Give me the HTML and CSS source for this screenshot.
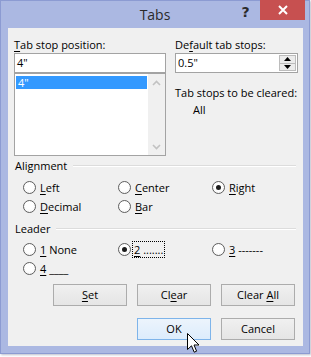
FILE: index.html
```html
<!DOCTYPE html>
<html>
<head>
<meta charset="utf-8">
<link rel="stylesheet" href="styles.css">
</head>
<body>
<div class="window">
  <div class="titlebar">
    <div></div>
    <div class="title">Tabs</div>
    <div class="tb-right">
      <div class="help">?</div>
      <div class="close"><svg width="10" height="10" viewBox="0 0 10 10"><path d="M1 1 L9 9 M9 1 L1 9" stroke="#fff" stroke-width="2"/></svg></div>
    </div>
  </div>
  <div class="panel">
    <div class="top">
      <div class="col-left">
        <div class="lbl"><u>T</u>ab stop position:</div>
        <div class="input">4"</div>
        <div class="listbox">
          <div class="items"><div class="item sel">4"</div></div>
          <div class="scroll">
            <div class="arrow"><svg width="9" height="6" viewBox="0 0 9 6"><path d="M1 5 L4.5 1.5 L8 5" fill="none" stroke="#c2c2c2" stroke-width="1.6"/></svg></div>
            <div class="arrow"><svg width="9" height="6" viewBox="0 0 9 6"><path d="M1 1 L4.5 4.5 L8 1" fill="none" stroke="#c2c2c2" stroke-width="1.6"/></svg></div>
          </div>
        </div>
      </div>
      <div class="col-right">
        <div class="lbl">De<u>f</u>ault tab stops:</div>
        <div class="spin">
          <div class="spin-val">0.5"</div>
          <div class="spin-btns">
            <div class="sbtn"><svg width="7" height="4" viewBox="0 0 7 4"><path d="M0 4 L3.5 0 L7 4 Z" fill="#000"/></svg></div>
            <div class="sbtn"><svg width="7" height="4" viewBox="0 0 7 4"><path d="M0 0 L3.5 4 L7 0 Z" fill="#000"/></svg></div>
          </div>
        </div>
        <div class="clr-lbl">Tab stops to be cleared:</div>
        <div class="clr-val">All</div>
      </div>
    </div>

    <div class="group group-align"><span>Alignment</span><div class="rule"></div></div>
    <div class="radios">
      <div class="radio"><span class="circle"></span><span><u>L</u>eft</span></div>
      <div class="radio"><span class="circle"></span><span><u>C</u>enter</span></div>
      <div class="radio"><span class="circle on"></span><span><u>R</u>ight</span></div>
      <div class="radio"><span class="circle"></span><span><u>D</u>ecimal</span></div>
      <div class="radio"><span class="circle"></span><span><u>B</u>ar</span></div>
    </div>

    <div class="group group-leader"><span>Leader</span><div class="rule"></div></div>
    <div class="radios radios-leader">
      <div class="radio"><span class="circle"></span><span><u>1</u> None</span></div>
      <div class="radio"><span class="circle on"></span><span class="focus"><u>2</u> .......</span></div>
      <div class="radio"><span class="circle"></span><span><u>3</u> -------</span></div>
      <div class="radio"><span class="circle"></span><span><u>4</u> ____</span></div>
    </div>

    <div class="btnrow btnrow-1">
      <div class="btn"><u>S</u>et</div>
      <div class="btn">Cl<u>e</u>ar</div>
      <div class="btn">Clear <u>A</u>ll</div>
    </div>
    <div class="btnrow btnrow-2">
      <div class="btn btn-ok">OK</div>
      <div class="btn">Cancel</div>
    </div>
  </div>
  <svg class="cursor" width="13" height="21" viewBox="0 0 13 21"><path d="M0.5 0.5 L0.5 16.5 L4.5 12.8 L7.2 19.2 L9.6 18.2 L7 12 L12 12 Z" fill="#fff" stroke="#000" stroke-width="1" stroke-linejoin="miter"/></svg>
</div>
</body>
</html>
```
FILE: styles.css
```css
html, body {
  margin: 0;
  padding: 0;
  background: #ffffff;
}
body {
  width: 311px;
  height: 357px;
  overflow: hidden;
  font-family: "Open Sans", "Noto Sans", "Liberation Sans", sans-serif;
  font-size: 11px;
  color: #000;
}
u {
  text-decoration: underline;
  text-underline-offset: 2px;
  text-decoration-thickness: 1px;
}
.window {
  position: relative;
  width: 308px;
  height: 352px;
  border: 1px solid #8c9bd2;
  background: #abb8e2;
  box-shadow: 1px 1px 2px rgba(60, 70, 110, 0.35);
}
.titlebar {
  height: 27px;
  display: grid;
  grid-template-columns: 1fr auto 1fr;
  align-items: start;
}
.title {
  font-size: 14px;
  line-height: 20px;
  padding-top: 4px;
  color: #2a2a2a;
}
.tb-right {
  display: flex;
  justify-content: flex-end;
  align-items: flex-start;
}
.help {
  width: 17px;
  margin-right: 6px;
  padding-top: 3px;
  text-align: center;
  font-family: "DejaVu Sans", "Liberation Sans", sans-serif;
  font-weight: bold;
  font-size: 14px;
  line-height: 17px;
  color: #2b2b2b;
}
.close {
  width: 45px;
  height: 20px;
  margin-right: 4px;
  margin-top: -1px;
  background: #c75050;
  display: flex;
  align-items: center;
  justify-content: center;
}
.panel {
  margin-left: 7px;
  width: 295px;
  height: 318px;
  background: #f0f0f0;
  box-sizing: border-box;
  padding-top: 9px;
}
.top {
  display: grid;
  grid-template-columns: 152px 123px;
  column-gap: 9px;
  padding-left: 6px;
}
.lbl {
  line-height: 16px;
  height: 16px;
}
.input {
  height: 20px;
  box-sizing: border-box;
  border: 1px solid #a3a3a3;
  background: #fff;
  padding-left: 2px;
  line-height: 18px;
}
.listbox {
  height: 83px;
  box-sizing: border-box;
  border: 1px solid #a3a3a3;
  background: #fff;
  display: flex;
}
.items {
  flex: 1;
  padding: 2px 1px;
}
.item {
  height: 13px;
  line-height: 13px;
  padding-left: 2px;
}
.item.sel {
  background: #3399ff;
  color: #fff;
}
.scroll {
  width: 17px;
  background: #f0f0f0;
  display: flex;
  flex-direction: column;
  justify-content: space-between;
}
.arrow {
  height: 17px;
  display: flex;
  align-items: center;
  justify-content: center;
}
.spin {
  height: 20px;
  box-sizing: border-box;
  border: 1px solid #a3a3a3;
  background: #fff;
  display: flex;
}
.spin-val {
  flex: 1;
  padding-left: 2px;
  line-height: 18px;
}
.spin-btns {
  width: 17px;
  margin: 1px 1px 1px 0;
  display: flex;
  flex-direction: column;
}
.sbtn {
  flex: 1;
  display: flex;
  align-items: center;
  justify-content: center;
  background: #ececec;
  border: 1px solid #bcbcbc;
}
.sbtn + .sbtn {
  border-top: none;
}
.clr-lbl {
  margin-top: 11px;
  line-height: 17px;
}
.clr-val {
  line-height: 17px;
  padding-left: 18px;
}
.group {
  display: flex;
  align-items: center;
  gap: 6px;
  padding: 0 7px 0 7px;
  line-height: 16px;
  height: 16px;
}
.group-align {
  margin-top: 2px;
}
.group-leader {
  margin-top: 5px;
}
.rule {
  flex: 1;
  height: 0;
  border-top: 1px solid #dcdcdc;
  border-bottom: 1px solid #ffffff;
}
.radios {
  display: grid;
  grid-template-columns: 95px 94px auto;
  grid-auto-rows: 19px;
  padding-left: 15px;
  margin-top: 4px;
}
.radios-leader {
  margin-top: 3px;
}
.radio {
  display: flex;
  align-items: center;
  gap: 4px;
}
.circle {
  width: 13px;
  height: 13px;
  box-sizing: border-box;
  border-radius: 50%;
  border: 1px solid #5e5e5e;
  background: radial-gradient(circle at 50% 40%, #ffffff 40%, #f2f2f2 100%);
  display: flex;
  align-items: center;
  justify-content: center;
}
.circle.on::after {
  content: "";
  width: 5px;
  height: 5px;
  border-radius: 50%;
  background: #1b1b1b;
}
.focus {
  outline: 1px dotted #000;
  outline-offset: 0;
  padding: 0 1px;
  line-height: 15px;
  margin-left: -2px;
}
.btnrow {
  display: flex;
  justify-content: flex-end;
  gap: 10px;
  padding-right: 8px;
}
.btnrow-1 {
  margin-top: 6px;
}
.btnrow-2 {
  margin-top: 12px;
}
.btn {
  width: 74px;
  height: 22px;
  box-sizing: border-box;
  border: 1px solid #acacac;
  background: linear-gradient(#f0f0f0, #e5e5e5);
  text-align: center;
  line-height: 20px;
}
.btn-ok {
  border-color: #7eb4ea;
  background: linear-gradient(#ecf4fc, #dcecfc);
}
.cursor {
  position: absolute;
  left: 186px;
  top: 332px;
}
```
